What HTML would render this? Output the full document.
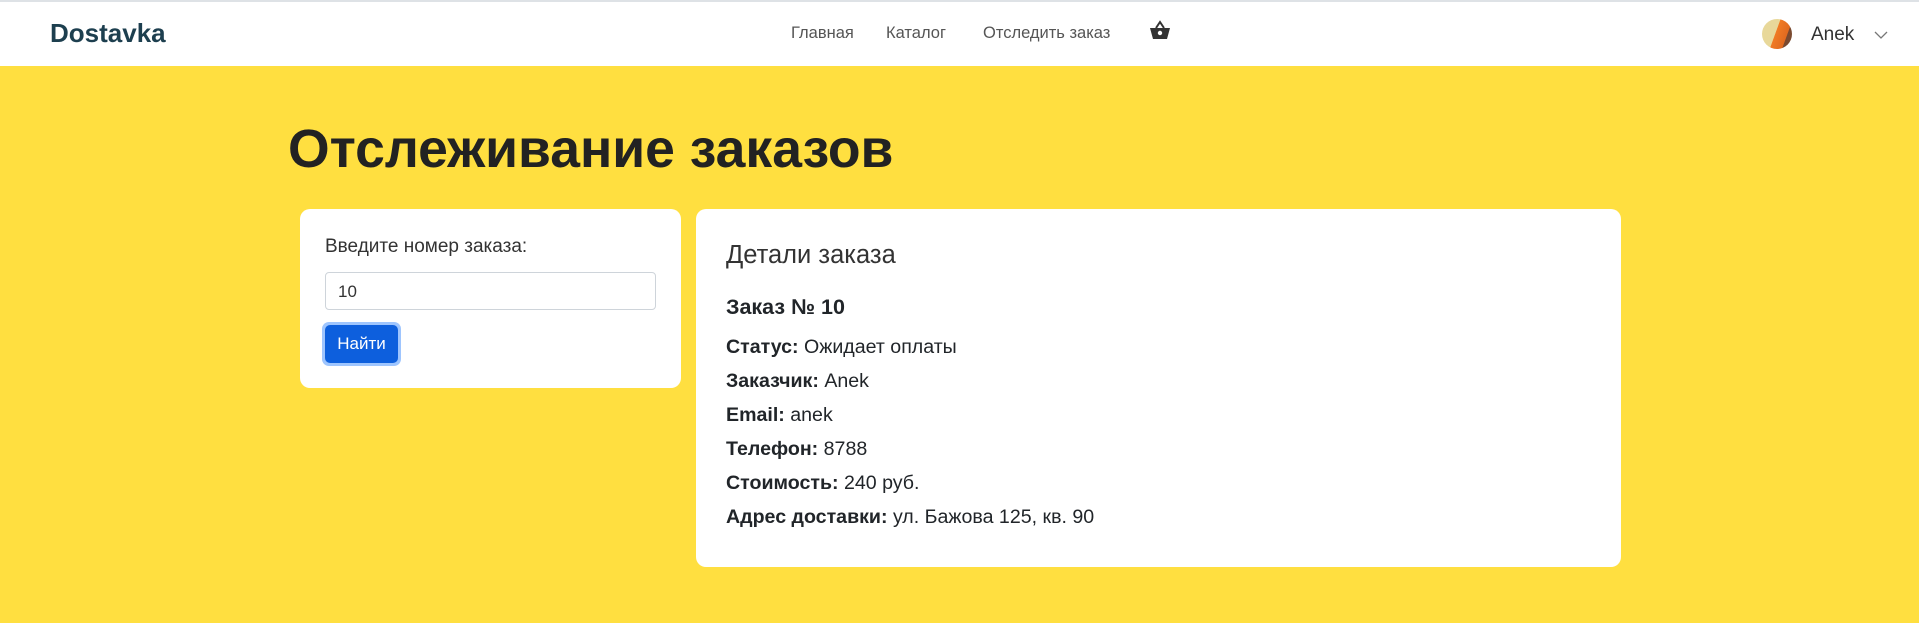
<!DOCTYPE html>
<html><head><meta charset="utf-8"><style>
*{box-sizing:border-box;margin:0;padding:0}
body{width:1919px;height:623px;overflow:hidden;background:#ffdf40;font-family:"Liberation Sans",sans-serif;color:#212529;position:relative}
.nav{position:absolute;top:0;left:0;width:1919px;height:66px;background:#fff;border-top:2px solid #dee2e6}
.abs{position:absolute}
.brand{left:50px;top:16px;font-size:26px;font-weight:bold;color:#1d3f4f}
.link{top:22px;font-size:16.5px;color:#555}
h1{position:absolute;left:288px;top:119px;font-size:53.5px;font-weight:bold;color:#222}
.card{position:absolute;background:#fff;border-radius:10px}
.row{position:absolute;left:30px;font-size:19.6px;color:#212529}
.row b{font-weight:bold}
</style></head><body>
<div class="nav">
<div class="abs brand">Dostavka</div>
<div class="abs link" style="left:791px">Главная</div>
<div class="abs link" style="left:886px">Каталог</div>
<div class="abs link" style="left:983px">Отследить заказ</div>
<svg class="abs" style="left:1149px;top:18px" width="22" height="20" viewBox="0 0 22 20"><path d="M7 8 L11 2 L15 8" stroke="#333" stroke-width="2" fill="none"/><path d="M1 8 H21 L18 19 H4 Z" fill="#333"/><circle cx="11" cy="13" r="2.2" fill="#fff"/></svg>
<div class="abs" style="left:1762px;top:17px;width:30px;height:30px;border-radius:50%;background:linear-gradient(110deg,#e8d89a 45%,#f07a24 46%,#e06a20 75%,#7a4a30 76%)"></div>
<div class="abs" style="left:1811px;top:22px;font-size:19px;color:#333">Anek</div>
<svg class="abs" style="left:1874px;top:29px" width="14" height="9" viewBox="0 0 14 9"><path d="M1 1 L7 7 L13 1" stroke="#777" stroke-width="1.3" fill="none"/></svg>
</div>
<h1>Отслеживание заказов</h1>
<div class="card" style="left:300px;top:209px;width:381px;height:179px">
<div class="abs" style="left:25px;top:27px;font-size:19px;color:#333">Введите номер заказа:</div>
<div class="abs" style="left:25px;top:63px;width:331px;height:38px;border:1px solid #ced4da;border-radius:4px;padding:9px 12px;font-size:17px;color:#333">10</div>
<div class="abs" style="left:22px;top:113px;width:79px;height:44px;border-radius:7px;background:#9ec5fe"></div>
<div class="abs" style="left:25px;top:116px;width:73px;height:38px;border-radius:5px;background:#0d5fdd;color:#fff;font-size:17px;text-align:center;line-height:38px">Найти</div>
</div>
<div class="card" style="left:696px;top:209px;width:925px;height:358px">
<div class="row" style="top:32px;font-size:25.5px;color:#333">Детали заказа</div>
<div class="row" style="top:86px;font-size:21.5px;font-weight:bold">Заказ № 10</div>
<div class="row" style="top:127px"><b>Статус:</b> Ожидает оплаты</div>
<div class="row" style="top:161px"><b>Заказчик:</b> Anek</div>
<div class="row" style="top:195px"><b>Email:</b> anek</div>
<div class="row" style="top:229px"><b>Телефон:</b> 8788</div>
<div class="row" style="top:263px"><b>Стоимость:</b> 240 руб.</div>
<div class="row" style="top:297px"><b>Адрес доставки:</b> ул. Бажова 125, кв. 90</div>
</div>
</body></html>
